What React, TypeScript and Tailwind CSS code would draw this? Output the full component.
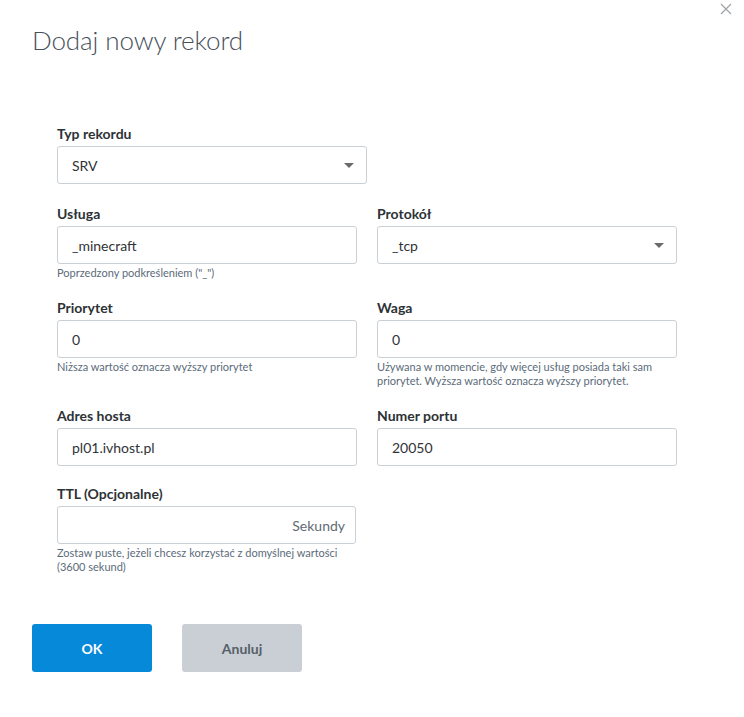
import React from 'react';

const Label: React.FC<{ children: React.ReactNode }> = ({ children }) => (
  <div className="text-[14px] leading-[18px] font-bold text-[#2d3236] mb-[3px]">{children}</div>
);

const Hint: React.FC<{ children: React.ReactNode }> = ({ children }) => (
  <div className="text-[11px] leading-[14px] text-[#5b6b79] mt-[2px]">{children}</div>
);

const Field: React.FC<{ value: string }> = ({ value }) => (
  <div className="h-[38px] border border-[#c9d0d6] rounded-[3px] bg-white px-[14px] flex items-center text-[14px] text-[#2f3337]">
    {value}
  </div>
);

const SelectBox: React.FC<{ value: string }> = ({ value }) => (
  <div className="h-[38px] border border-[#c9d0d6] rounded-[3px] bg-white pl-[14px] pr-[12px] flex items-center justify-between text-[14px] text-[#2f3337]">
    <span>{value}</span>
    <svg width="10" height="5" viewBox="0 0 10 5">
      <path d="M0 0 L10 0 L5 5 Z" fill="#6b6b6b" />
    </svg>
  </div>
);

const App: React.FC = () => {
  return (
    <div className="relative w-[744px] h-[717px] bg-white font-['Lato','Open_Sans',sans-serif]">
      <button className="absolute right-[12px] top-[3px]">
        <svg width="12" height="12" viewBox="0 0 12 12">
          <path d="M1 1 L11 11 M11 1 L1 11" stroke="#9ea3a8" strokeWidth="1.2" />
        </svg>
      </button>

      <div className="pt-[24px] px-[32px]">
        <h1 className="text-[26px] leading-[32px] font-light text-[#48505a] tracking-[-0.1px]">Dodaj nowy rekord</h1>

        <div className="mt-[69px] ml-[25px] w-[620px]">
          <div className="w-[310px] mb-[21px]">
            <Label>Typ rekordu</Label>
            <SelectBox value="SRV" />
          </div>

          <div className="grid grid-cols-2 gap-x-[20px] gap-y-[19px] items-start">
            <div>
              <Label>Usługa</Label>
              <Field value="_minecraft" />
              <Hint>Poprzedzony podkreśleniem ("_")</Hint>
            </div>
            <div>
              <Label>Protokół</Label>
              <SelectBox value="_tcp" />
            </div>

            <div>
              <Label>Priorytet</Label>
              <Field value="0" />
              <Hint>Niższa wartość oznacza wyższy priorytet</Hint>
            </div>
            <div>
              <Label>Waga</Label>
              <Field value="0" />
              <Hint>Używana w momencie, gdy więcej usług posiada taki sam priorytet. Wyższa wartość oznacza wyższy priorytet.</Hint>
            </div>

            <div>
              <Label>Adres hosta</Label>
              <Field value="pl01.ivhost.pl" />
            </div>
            <div>
              <Label>Numer portu</Label>
              <Field value="20050" />
            </div>

            <div className="w-[299px]">
              <Label>TTL (Opcjonalne)</Label>
              <div className="h-[38px] border border-[#c9d0d6] rounded-[3px] bg-white px-[10px] flex items-center justify-end text-[14px] text-[#5f6a74]">
                Sekundy
              </div>
              <Hint>Zostaw puste, jeżeli chcesz korzystać z domyślnej wartości (3600 sekund)</Hint>
            </div>
          </div>
        </div>

        <div className="mt-[50px] flex gap-[30px]">
          <button className="w-[120px] h-[48px] rounded-[3px] bg-[#0789da] text-white text-[14px] font-bold">OK</button>
          <button className="w-[120px] h-[48px] rounded-[3px] bg-[#c9cfd5] text-[#56606a] text-[14px] font-bold">Anuluj</button>
        </div>
      </div>
    </div>
  );
};

export default App;
